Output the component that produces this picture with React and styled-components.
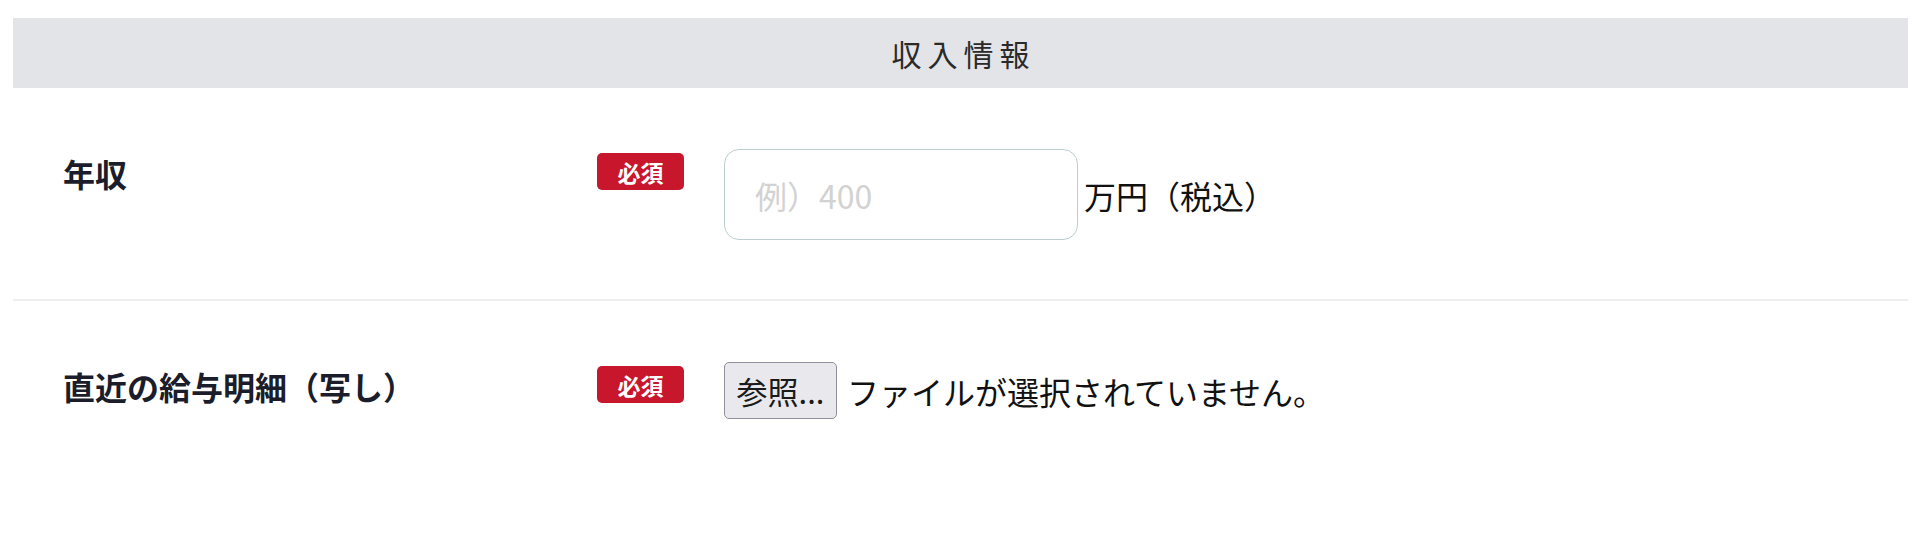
import React from 'react'
import styled, { createGlobalStyle } from 'styled-components'

const GlobalStyle = createGlobalStyle`
  body {
    margin: 0;
    background: #fff;
    font-family: "Noto Sans CJK JP", "Noto Sans", sans-serif;
    color: #1a1a1a;
  }
`

const rows = [
  { label: '年収', kind: 'income' },
  { label: '直近の給与明細（写し）', kind: 'file' },
]

const App = () => {
  return (
    <Page>
      <GlobalStyle />
      <SectionTitle>収入情報</SectionTitle>
      {rows.map((row, i) => (
        <Row key={row.kind} $divider={i < rows.length - 1}>
          <Label>{row.label}</Label>
          <Badge>必須</Badge>
          {row.kind === 'income' ? (
            <Field>
              <AmountInput type="text" placeholder="例）400" />
              <Unit>万円（税込）</Unit>
            </Field>
          ) : (
            <Field>
              <FileButton type="button">参照...</FileButton>
              <FileStatus>ファイルが選択されていません。</FileStatus>
            </Field>
          )}
        </Row>
      ))}
    </Page>
  )
}

export default App

const Page = styled.div`
  padding: 18px 12px 0 13px;
`

const SectionTitle = styled.h2`
  margin: 0;
  height: 70px;
  background: #e2e4e8;
  display: flex;
  align-items: center;
  justify-content: center;
  padding-left: 6px;
  font-size: 30px;
  font-weight: 400;
  letter-spacing: 6px;
  color: #2a2a2a;
`

const Row = styled.div`
  display: grid;
  grid-template-columns: 534px 127px 1fr;
  align-items: start;
  padding: 61px 0 59px 50px;
  border-bottom: ${(p) => (p.$divider ? '2px solid #eeeeee' : 'none')};
`

const Label = styled.div`
  font-size: 32px;
  font-weight: 700;
  line-height: 48px;
  color: #1b1d2b;
`

const Badge = styled.span`
  margin-top: 4px;
  width: 87px;
  height: 37px;
  display: flex;
  align-items: center;
  justify-content: center;
  background: #c8162c;
  border-radius: 5px;
  color: #fff;
  font-size: 23px;
  font-weight: 700;
`

const Field = styled.div`
  display: flex;
  align-items: center;
`

const AmountInput = styled.input`
  box-sizing: border-box;
  width: 354px;
  height: 91px;
  padding: 0 30px;
  border: 1.5px solid #bccdcf;
  border-radius: 15px;
  font-family: inherit;
  font-size: 32px;
  color: #1a1a1a;
  outline: none;

  &::placeholder {
    color: #d2d2d2;
  }
`

const Unit = styled.span`
  margin-left: 6px;
  font-size: 32px;
  color: #111;
`

const FileButton = styled.button`
  box-sizing: border-box;
  width: 113px;
  height: 57px;
  padding: 0 10px;
  background: #e9e9ed;
  border: 1.5px solid #8f8f9d;
  border-radius: 5px;
  font-family: inherit;
  font-size: 31px;
  color: #1a1a1a;
  white-space: nowrap;
`

const FileStatus = styled.span`
  margin-left: 10px;
  font-size: 32px;
  color: #111;
`
